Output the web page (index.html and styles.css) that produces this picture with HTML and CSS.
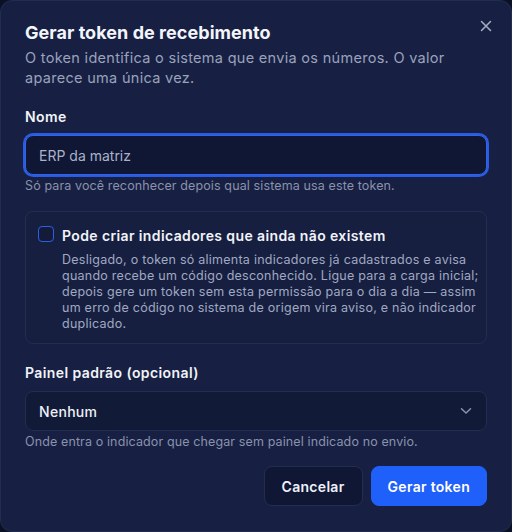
FILE: index.html
```html
<!DOCTYPE html>
<html lang="pt-BR">
<head>
<meta charset="utf-8">
<title>Gerar token de recebimento</title>
<link rel="stylesheet" href="styles.css">
</head>
<body>
<div class="dialog">
  <button class="close" aria-label="Fechar">
    <svg width="12" height="12" viewBox="0 0 12 12"><path d="M1.5 1.5 L10.5 10.5 M10.5 1.5 L1.5 10.5" stroke="currentColor" stroke-width="1.5" stroke-linecap="round" fill="none"/></svg>
  </button>
  <h2 class="title">Gerar token de recebimento</h2>
  <p class="subtitle">O token identifica o sistema que envia os números. O valor aparece uma única vez.</p>

  <div class="field">
    <label class="label">Nome</label>
    <div class="input focused">ERP da matriz</div>
    <p class="help">Só para você reconhecer depois qual sistema usa este token.</p>
  </div>

  <div class="card">
    <span class="checkbox"></span>
    <div class="card-text">
      <div class="card-label">Pode criar indicadores que ainda não existem</div>
      <p class="card-desc">Desligado, o token só alimenta indicadores já cadastrados e avisa<br>quando recebe um código desconhecido. Ligue para a carga inicial;<br>depois gere um token sem esta permissão para o dia a dia — assim<br>um erro de código no sistema de origem vira aviso, e não indicador<br>duplicado.</p>
    </div>
  </div>

  <div class="field field-select">
    <label class="label">Painel padrão (opcional)</label>
    <div class="select">
      <span>Nenhum</span>
      <svg width="12" height="8" viewBox="0 0 12 8"><path d="M1.5 1.8 L6 6 L10.5 1.8" stroke="currentColor" stroke-width="1.5" stroke-linecap="round" stroke-linejoin="round" fill="none"/></svg>
    </div>
    <p class="help">Onde entra o indicador que chegar sem painel indicado no envio.</p>
  </div>

  <div class="actions">
    <button class="btn btn-secondary">Cancelar</button>
    <button class="btn btn-primary">Gerar token</button>
  </div>
</div>
</body>
</html>
```
FILE: styles.css
```css
* { box-sizing: border-box; }
html, body { margin: 0; padding: 0; }
body {
  background: #0b1124;
  font-family: Inter, "Noto Sans", sans-serif;
  width: 512px;
  height: 532px;
  overflow: hidden;
}
.dialog {
  position: relative;
  width: 512px;
  height: 532px;
  background: #172042;
  border: 1px solid #222c4c;
  border-radius: 12px;
  padding: 19px 24px 24px 24px;
  color: #eef1f8;
}
.close {
  position: absolute;
  top: 18px;
  right: 18px;
  width: 14px;
  height: 14px;
  padding: 1px;
  border: 0;
  background: none;
  color: #a7afc7;
  display: flex;
}
.title {
  margin: 0;
  font-size: 18px;
  line-height: 26px;
  font-weight: 700;
  color: #f3f5fb;
  letter-spacing: 0.05px;
}
.subtitle {
  margin: 2px 0 0 0;
  font-size: 14.5px;
  line-height: 20px;
  letter-spacing: 0.3px;
  color: #9aa2bd;
}
.field { margin-top: 19px; }
.label {
  display: block;
  font-size: 14px;
  line-height: 20px;
  font-weight: 600;
  letter-spacing: 0.4px;
  color: #f1f3f9;
}
.input {
  margin-top: 8px;
  height: 40px;
  border-radius: 8px;
  background: #0f1734;
  border: 1px solid #2f63ea;
  box-shadow: 0 0 0 2px #2a5be0;
  padding: 0 13px;
  display: flex;
  align-items: center;
  font-size: 14px;
  color: #aab2c9;
}
.help {
  margin: 3px 0 0 0;
  font-size: 12.5px;
  line-height: 16px;
  letter-spacing: 0.12px;
  color: #8a92ad;
}
.card {
  margin-top: 17px;
  border: 1px solid #232d4e;
  border-radius: 8px;
  background: #161f40;
  padding: 14px 6px 11px 12px;
  display: flex;
  gap: 8px;
}
.checkbox {
  flex: none;
  width: 16px;
  height: 16px;
  border: 1.5px solid #2d5fe6;
  border-radius: 4px;
  background: #131b39;
}
.card-label {
  font-size: 14px;
  line-height: 20px;
  font-weight: 600;
  letter-spacing: 0.38px;
  color: #f1f3f9;
}
.card-desc {
  margin: 6px 0 0 0;
  font-size: 12.5px;
  line-height: 16px;
  letter-spacing: 0.25px;
  color: #a1a9c2;
  white-space: nowrap;
}
.field-select { margin-top: 19px; }
.select {
  margin-top: 8px;
  height: 40px;
  border-radius: 8px;
  background: #111a37;
  border: 1px solid #232d4d;
  padding: 0 14px 0 13px;
  display: flex;
  align-items: center;
  justify-content: space-between;
  font-size: 14px;
  font-weight: 500;
  letter-spacing: 0.3px;
  color: #eef1f8;
}
.select svg { color: #8b93ae; }
.actions {
  margin-top: 16px;
  display: flex;
  justify-content: flex-end;
  gap: 8px;
}
.btn {
  height: 40px;
  border-radius: 8px;
  font-family: inherit;
  font-size: 14px;
  font-weight: 600;
  letter-spacing: 0.3px;
  cursor: pointer;
}
.btn-secondary {
  padding: 0 17px;
  background: #0f1734;
  border: 1px solid #232d4d;
  color: #eef1f8;
}
.btn-primary {
  padding: 0 16px;
  background: #1f60fa;
  border: 1px solid #1f60fa;
  color: #ffffff;
}
```
